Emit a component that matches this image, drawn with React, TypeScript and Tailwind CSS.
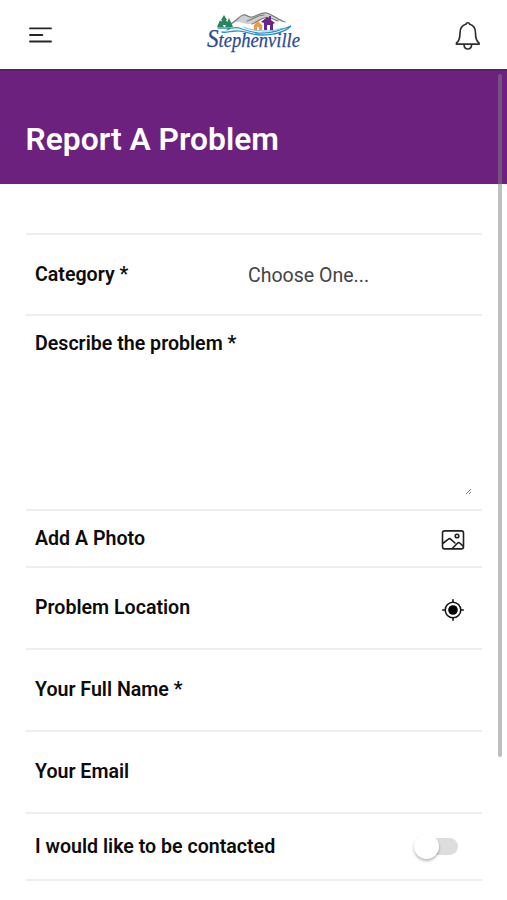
import type { ReactNode } from "react";

function Logo() {
  return (
    <svg width="100" height="48" viewBox="0 0 100 48" fill="none" strokeLinecap="round" overflow="visible" aria-label="Stephenville">
      <path d="M28 11C33 10 35 5 39 4C43 3 46 7 50 6C54 4 58 1 63 2C69 3 74 8 80 11C72 10 69 6 64 5C58 6 54 12 47 13C41 14 37 10 28 11Z" fill="#cfcfcf" />
      <path d="M26 13C32 11 35 5 39 4C43 3 44 7 48 6C53 5 57 1 63 2C69 4 74 9 81 11M43 10C49 9 52 4 60 4M48 13C54 11 58 6 64 6C68 7 71 9 74 10" stroke="#7b7b7e" strokeWidth="1.2" />
      <path d="M20 4L17 9H18L15 14H25L22 9H23ZM16 9L13 16H20ZM25 7L21 16H29Z" fill="#278758" />
      <path d="M49 15L54 10L59 15H58V19H55V16H53V19H50V15Z" fill="#f29a3c" />
      <path d="M57 11L63 6L65 7V5H67V9L71 12L69 13V19H66V14H63V19H60V12Z" fill="#692589" />
      <path d="M14 17H26M23 19C28 16 33 16 38 18C44 20 48 21 54 22C67 23 77 19 87 15C79 23 66 24 57 24C46 24 40 19 32 20C27 20 22 22 18 21" stroke="#2c91cb" strokeWidth="1.3" />
      <path d="M40 16C45 19 55 20 63 20C70 20 75 18 79 17" stroke="#63b5df" strokeWidth=".9" />
      <text x="3" y="36" textLength="93" lengthAdjust="spacingAndGlyphs" fill="#2b4a92" stroke="#2b4a92" strokeWidth=".25" className="font-['Liberation_Serif',serif] text-[20px] italic"><tspan className="text-[25px]">S</tspan>tephenville</text>
    </svg>
  );
}

function MenuIcon() {
  return (
    <svg width="24" height="18" viewBox="0 0 24 18" stroke="#262626" strokeWidth="1.9" strokeLinecap="round">
      <path d="M2 2.4H23M2 9H14.3M2 15.5H23" />
    </svg>
  );
}

function BellIcon() {
  return (
    <svg width="26" height="30" viewBox="0 0 26 30" fill="none" stroke="#303030" strokeWidth="1.7" strokeLinejoin="round">
      <path d="M10.9 3.3C11.4 1.2 14.2 1.2 14.7 3.3C18.6 4.3 20.5 8 20.5 12C20.5 18 21.8 20.3 24 22V23.2H1.5V22C3.8 20.3 5 18 5 12C5 8 6.9 4.3 10.9 3.3Z" />
      <path d="M9 23.5C9.2 29.5 16.4 29.5 16.6 23.5" />
    </svg>
  );
}

function PhotoIcon() {
  return (
    <svg width="24" height="22" viewBox="0 0 24 22" fill="none" stroke="#202020" strokeWidth="1.6" strokeLinejoin="round" strokeLinecap="round">
      <rect x="1.5" y="1.9" width="21" height="18" rx="2.2" />
      <circle cx="16" cy="7" r="1.8" />
      <path d="M1.7 14.5L7.4 10.1Q8.5 9.2 9.6 10.1L14 14M11.3 19.5L16.4 14.2Q17.5 13 18.7 14L22.2 17.2" />
    </svg>
  );
}

function LocateIcon() {
  return (
    <svg width="24" height="24" viewBox="0 0 24 24" fill="none" stroke="#161616" strokeWidth="1.6" strokeLinecap="round">
      <circle cx="12" cy="12" r="7.8" />
      <circle cx="12" cy="12" r="4.8" fill="#000" stroke="none" />
      <path d="M12 1.7V4M12 20V22.3M1.7 12H4M20 12H22.3" />
    </svg>
  );
}

function Row({ label, size, children }: { label: string; size: string; children?: ReactNode }) {
  return (
    <div className={`flex border-b-2 border-[#eeeeee] pl-[9px] ${size}`}>
      <span className="w-[213px] shrink-0 whitespace-nowrap text-[19.6px] leading-6 font-semibold text-[#0c0c0c]">{label}</span>
      {children}
    </div>
  );
}

export default function App() {
  return (
    <div className="relative h-[900px] w-full overflow-hidden bg-white font-['Roboto',sans-serif]">
      <header className="flex h-[69px] items-start pt-[11px] pr-[26px] pl-[28px]">
        <button className="mt-[15px] w-[26px]" aria-label="Menu"><MenuIcon /></button>
        <div className="ml-[150px]"><Logo /></div>
        <button className="mt-[10px] ml-auto" aria-label="Notifications"><BellIcon /></button>
      </header>
      <section className="h-[115px] border-t-2 border-[#592069] bg-[#6c217f] pt-[48px] pl-[25.5px]">
        <h1 className="text-[31.8px] leading-10 font-semibold text-white">Report A Problem</h1>
      </section>
      <main className="mt-[49px] mr-[25px] ml-[26px] border-t-2 border-[#eeeeee]">
        <Row label="Category *" size="h-[81px] pt-[28px]">
          <span className="mt-px text-[19.55px] leading-6 text-[#444]">Choose One...</span>
        </Row>
        <Row label="Describe the problem *" size="h-[194.5px] pt-[16px]">
          <svg className="mt-auto mr-[10px] mb-[14px] ml-auto" width="7" height="7" viewBox="0 0 7 7" stroke="#777"><path d="M1 6L6 1M4 6L6 4" /></svg>
        </Row>
        <Row label="Add A Photo" size="h-[57.5px] pt-[16px]">
          <span className="mt-[2px] mr-[17px] ml-auto"><PhotoIcon /></span>
        </Row>
        <Row label="Problem Location" size="h-[81.5px] pt-[28px]">
          <span className="mt-[2px] mr-[17px] ml-auto"><LocateIcon /></span>
        </Row>
        <Row label="Your Full Name *" size="h-[82px] pt-[28px]" />
        <Row label="Your Email" size="h-[82px] pt-[28px]" />
        <Row label="I would like to be contacted" size="h-[67.5px] pt-[21px]">
          <button role="switch" aria-checked="false" aria-label="Contact me" className="mt-[3px] mr-[24px] ml-auto flex h-[17px] w-[42px] items-center rounded-full bg-[#dddddd]">
            <span className="-ml-[2px] size-[25px] rounded-full bg-white shadow-[0_2px_3px_rgba(0,0,0,0.28)]" />
          </button>
        </Row>
      </main>
      <div className="absolute top-[74px] right-[5px] h-[683px] w-[4px] rounded-sm bg-[#808080]/50" />
    </div>
  );
}
